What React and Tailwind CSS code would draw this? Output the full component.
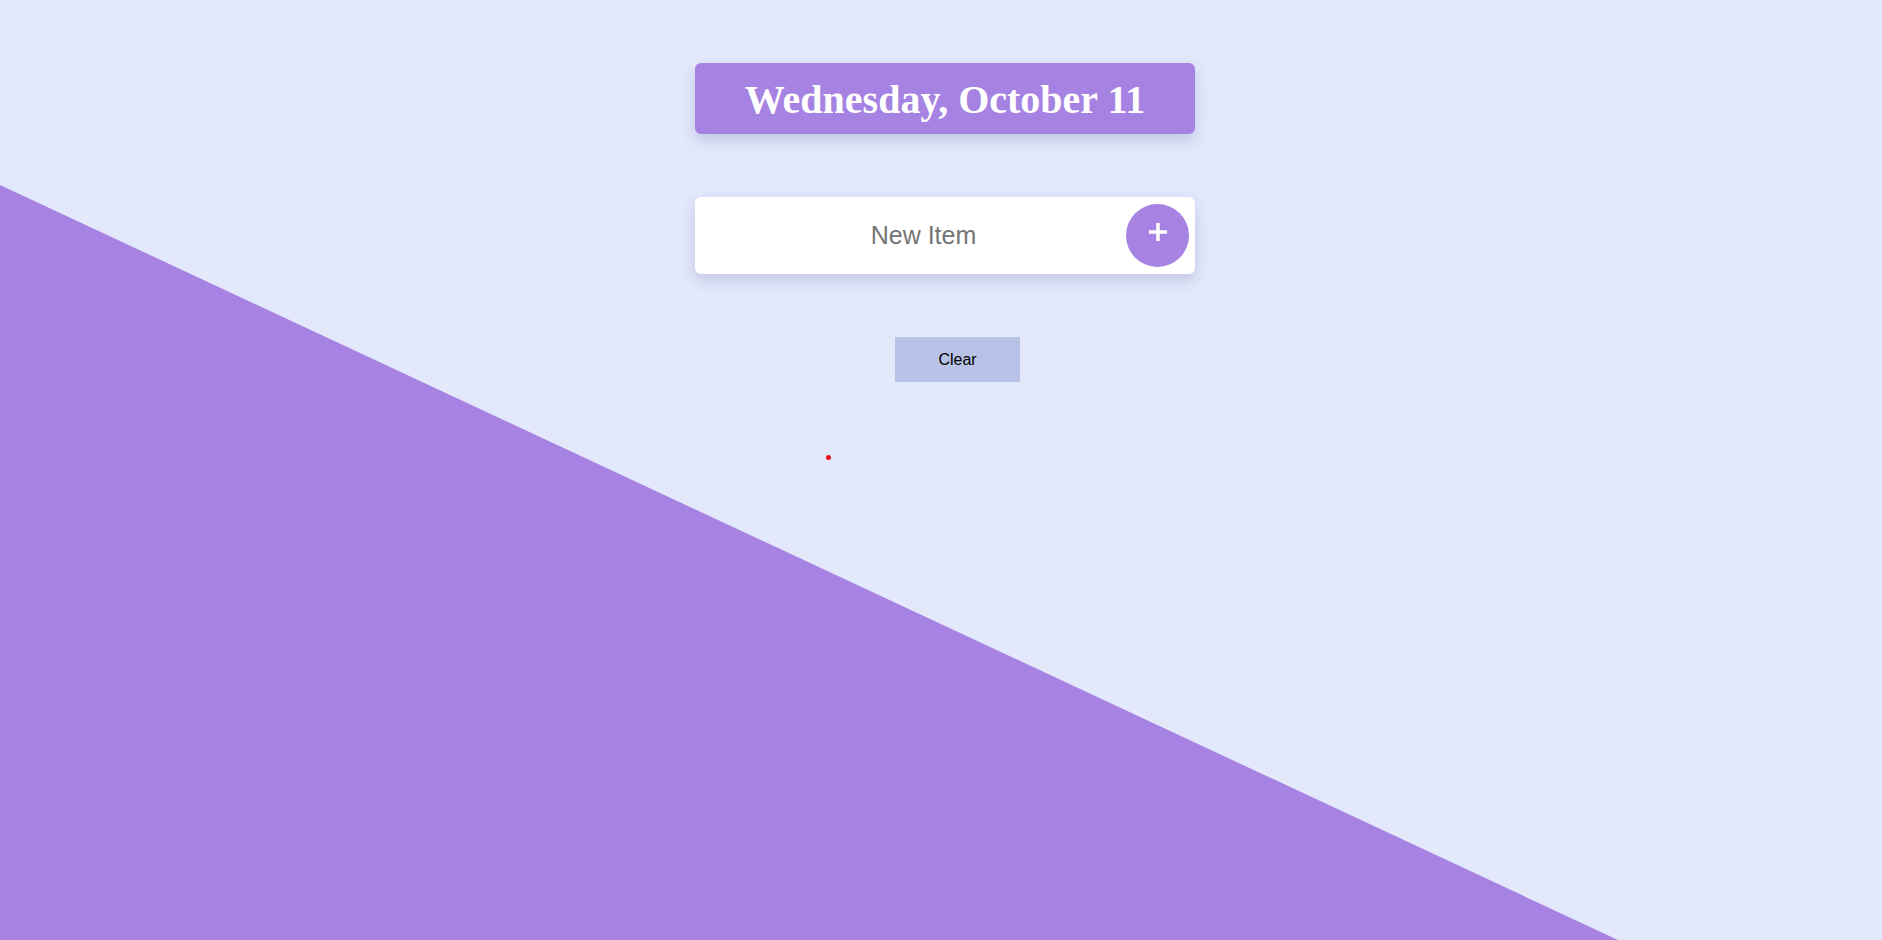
import React from "react";

export default function App() {
  return (
    <div className="relative min-h-[940px] w-full overflow-hidden bg-[#e3e8fb] font-['Liberation_Sans',Arial,sans-serif]">
      <div className="absolute inset-0 bg-[#a683e2] [clip-path:polygon(0_185px,1618px_100%,0_100%)]" />

      <div className="relative flex flex-col items-center pl-[8px] pt-[63px]">
        <div className="flex h-[71px] w-[500px] items-center justify-center rounded-md bg-[#a683e2] shadow-[0_6px_14px_rgba(90,100,160,0.25)]">
          <h1 className="pt-[2px] font-['Liberation_Serif','Times_New_Roman',serif] text-[40px] font-bold leading-none text-white">
            Wednesday, October 11
          </h1>
        </div>

        <div className="mt-[63px] flex h-[77px] w-[500px] items-center rounded-md bg-white pr-[6px] shadow-[0_6px_14px_rgba(90,100,160,0.25)]">
          <input
            type="text"
            placeholder="New Item"
            className="h-full min-w-0 flex-1 bg-transparent pl-[26px] text-center text-[25px] text-[#333] outline-none placeholder:text-[#757575]"
          />
          <button className="flex h-[63px] w-[63px] items-center justify-center rounded-full bg-[#a683e2] pb-[8px] text-white">
            <svg width="18" height="18" viewBox="0 0 18 18" fill="none" stroke="currentColor" strokeWidth="3.5">
              <path d="M9 0v18M0 9h18" />
            </svg>
          </button>
        </div>

        <div className="mt-[63px] flex w-[500px] justify-center pl-[25px]">
          <button className="h-[45px] w-[125px] bg-[#b8c2e7] text-[16px] text-black">
            Clear
          </button>
        </div>

        <div className="mt-[73px] flex w-[500px]">
          <span className="ml-[131px] block h-[5px] w-[5px] rounded-full bg-[#e8121f]" />
        </div>
      </div>
    </div>
  );
}
